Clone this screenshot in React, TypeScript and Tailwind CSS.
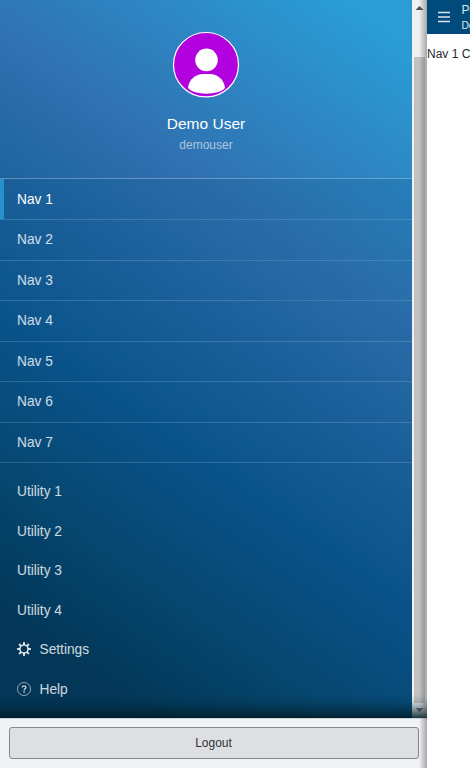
import React from 'react';

const navItems = ['Nav 1', 'Nav 2', 'Nav 3', 'Nav 4', 'Nav 5', 'Nav 6', 'Nav 7'];
const utilityItems = ['Utility 1', 'Utility 2', 'Utility 3', 'Utility 4'];

function Avatar() {
  return (
    <svg width="68" height="68" viewBox="0 0 68 68" className="block">
      <ellipse cx="34" cy="33.700" rx="32.500" ry="32.200" fill="#b300df" stroke="#fff" strokeWidth="1.2" />
      <circle cx="34.5" cy="28.900" r="11.3" fill="#fff" />
      <path d="M16 57C17 48 24 43 31 43h7c7 0 14 5 15 14C47 64.500 22 64.500 16 57Z" fill="#fff" />
    </svg>
  );
}

function GearIcon() {
  return (
    <svg width="14" height="14" viewBox="0 0 14 14" fill="none" stroke="currentColor" className="block">
      <circle cx="7" cy="7" r="4" strokeWidth="1.6" />
      <path d="M7 0v3M7 11v3M0 7h3M11 7h3M2.050 2.050l2 2M9.950 9.950l2 2M2.050 11.950l2-2M9.950 4.050l2-2" strokeWidth="2" />
    </svg>
  );
}

function HelpIcon() {
  return (
    <svg width="14" height="14" viewBox="0 0 14 14" fill="none" stroke="currentColor" className="block">
      <circle cx="7" cy="7" r="6.500" strokeWidth="0.700" />
      <path d="M5.200 5.600C5.200 3.300 8.900 3.300 8.900 5.500C8.900 6.800 7.100 6.800 7.100 8.400" strokeWidth="1.300" />
      <path d="M7.100 9.300v1.400" strokeWidth="1.400" />
    </svg>
  );
}

function Scrollbar() {
  return (
    <div className="flex w-[15px] flex-col items-center bg-[#f1f1f1]">
      <svg width="15" height="57" viewBox="0 0 15 57" className="block shrink-0">
        <path d="M3.500 10L7.500 6L11.500 10Z" fill="#505050" />
      </svg>
      <div className="w-[11px] flex-1 bg-[#c1c1c1]" />
      <svg width="15" height="15" viewBox="0 0 15 15" className="block shrink-0">
        <path d="M3.500 5L7.500 9L11.500 5Z" fill="#707678" />
      </svg>
    </div>
  );
}

export default function App() {
  return (
    <div className="flex h-[768px] w-[470px] overflow-hidden bg-white font-['Liberation_Sans',Arial,sans-serif]">
      <aside className="relative flex w-[427px] shrink-0 flex-col">
        <div className="relative flex h-[718px] bg-[linear-gradient(35deg,#033351_10%,#07466e_24%,#0a538b_38%,#3071b1_67%,#2a9dd6_94%)]">
          <div className="flex w-[412px] flex-col">
            <header className="flex h-[178px] flex-col items-center pt-[31px]">
              <Avatar />
              <div className="mt-[15px] text-[15.500px] leading-5 text-white">Demo User</div>
              <div className="mt-[3px] text-xs leading-4 text-white/60">demouser</div>
            </header>
            <nav className="flex-1 bg-[#004b76]/15 text-[13.720px] leading-6 text-white/80">
              <ul className="border-t border-white/30">
                {navItems.map((item, i) => (
                  <li
                    key={item}
                    className={
                      'flex items-center border-b border-white/15 ' +
                      (i === 0
                        ? 'h-[41px] border-l-4 border-l-[#2890cc] pt-[2px] pl-[13px] text-white'
                        : 'h-[40.500px] pt-px pl-[17px]')
                    }
                  >
                    {item}
                  </li>
                ))}
              </ul>
              <ul className="pt-[8.500px]">
                {utilityItems.map((item) => (
                  <li key={item} className="flex h-[39.500px] items-center pl-[17px]"><span className="pt-[2px]">{item}</span></li>
                ))}
                <li className="flex h-[39.500px] items-center gap-[8.500px] pl-[17px]"><GearIcon /><span className="pt-[2px]">Settings</span></li>
                <li className="flex h-[39.500px] items-center gap-[8.500px] pl-[17px]"><HelpIcon /><span className="pt-[2px]">Help</span></li>
              </ul>
            </nav>
          </div>
          <Scrollbar />
          <div className="pointer-events-none absolute inset-x-0 bottom-0 h-6 bg-[linear-gradient(to_top,rgba(0,30,42,0.88),rgba(0,34,46,0.45)_35%,rgba(0,34,46,0.12)_70%,rgba(0,34,46,0))]" />
        </div>
        <footer className="flex h-[50px] border-t border-[#cfd3d6] bg-[#f1f2f5] px-[9px] pt-2">
          <button className="h-8 w-[410px] shrink-0 rounded-[3px] border border-[#85878b] bg-[#dedfe2] pr-px text-xs text-[#2f3336]">Logout</button>
        </footer>
        <div className="pointer-events-none absolute inset-y-0 right-0 w-[8px] bg-linear-to-r from-transparent to-[#30383a]/40" />
      </aside>
      <main className="flex w-[43px] flex-col overflow-hidden whitespace-nowrap">
        <header className="flex h-[34px] shrink-0 bg-[#004b7b] pl-[11px] text-white/85">
          <svg width="12" height="34" viewBox="0 0 12 34" className="block shrink-0">
            <path d="M0 12.500h12M0 17h12M0 21.500h12" stroke="currentColor" strokeWidth="1.300" />
          </svg>
          <div className="ml-[11.400px]">
            <div className="pt-[2px] text-xs leading-4">Portal</div>
            <div className="text-[10.300px] leading-4">Demo</div>
          </div>
        </header>
        <div className="pt-3 text-xs leading-4 text-[#25282c]">Nav 1 Content</div>
      </main>
    </div>
  );
}
